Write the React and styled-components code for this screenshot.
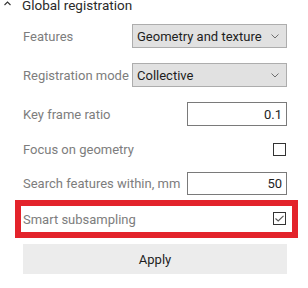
import React from "react";
import styled, { createGlobalStyle } from "styled-components";

const Global = createGlobalStyle`
  html, body { margin: 0; padding: 0; background: #ffffff; }
  body { font-family: Roboto, "Noto Sans", Arial, sans-serif; font-size: 13px; }
`;

const Panel = styled.div`
  width: 308px;
  height: 288px;
  overflow: hidden;
  box-sizing: border-box;
  padding: 0 21px 0 23px;
  display: flex;
  flex-direction: column;
`;

const Header = styled.div`
  display: flex;
  align-items: center;
  height: 12px;
  margin-top: -1px;
  margin-left: -19px;
  gap: 11px;
  color: #2a2a2a;
  font-size: 13.5px;
  line-height: 12px;
  white-space: nowrap;
`;

const Caret = styled.svg`
  width: 7px;
  height: 5px;
  margin-top: -3px;
  flex: none;
`;

const Row = styled.div`
  display: flex;
  align-items: center;
  justify-content: space-between;
  height: ${(p) => p.$h || 24}px;
  margin-top: ${(p) => p.$mt || 0}px;
  flex: none;
`;

const HighlightRow = styled(Row)`
  border: 6px solid #e3232b;
  margin-left: -8px;
  margin-right: -11px;
  padding: 0 5px 0 2px;
`;

const Label = styled.span`
  color: #7d7d7d;
  font-size: 13px;
  white-space: nowrap;
`;

const Select = styled.div`
  box-sizing: border-box;
  flex: none;
  width: ${(p) => p.$w}px;
  height: 24px;
  background: #e1e1e1;
  border: 1px solid #adadad;
  display: flex;
  align-items: center;
  justify-content: space-between;
  padding: 0 7px 0 4px;
  color: #1e1e1e;
  font-size: 13px;
  white-space: nowrap;
`;

const Chevron = styled.svg`
  width: 8px;
  height: 5px;
  flex: none;
`;

const Input = styled.div`
  box-sizing: border-box;
  flex: none;
  width: 100px;
  height: ${(p) => p.$h || 24}px;
  border: 1px solid #7a7a7a;
  background: #fff;
  display: flex;
  align-items: center;
  justify-content: flex-end;
  padding-right: 4px;
  color: #1e1e1e;
  font-size: 13px;
`;

const Box = styled.div`
  box-sizing: border-box;
  flex: none;
  width: 13px;
  height: 13px;
  border: 1px solid #333;
  margin-right: 1px;
  display: flex;
  align-items: center;
  justify-content: center;
  margin-top: ${(p) => p.$mt || 0}px;
`;

const Button = styled.div`
  margin-top: 6px;
  height: 30px;
  flex: none;
  background: #ececec;
  display: flex;
  align-items: center;
  justify-content: center;
  color: #1e1e1e;
  font-size: 13px;
`;

const ChevronDown = () => (
  <Chevron viewBox="0 0 8 5">
    <path d="M0.5 0.5 L4 4 L7.5 0.5" fill="none" stroke="#6e6e6e" strokeWidth="1" />
  </Chevron>
);

export default function App() {
  return (
    <>
      <Global />
      <Panel>
        <Header>
          <Caret viewBox="0 0 7 5">
            <path d="M0.5 4 L3.5 1 L6.5 4" fill="none" stroke="#333" strokeWidth="1.1" />
          </Caret>
          <span>Global registration</span>
        </Header>
        <Row $mt={13}>
          <Label>Features</Label>
          <Select $w={155}>
            <span>Geometry and texture</span>
            <ChevronDown />
          </Select>
        </Row>
        <Row $mt={15}>
          <Label>Registration mode</Label>
          <Select $w={155}>
            <span>Collective</span>
            <ChevronDown />
          </Select>
        </Row>
        <Row $mt={15}>
          <Label>Key frame ratio</Label>
          <Input>0.1</Input>
        </Row>
        <Row $mt={11}>
          <Label>Focus on geometry</Label>
          <Box />
        </Row>
        <Row $mt={10}>
          <Label>Search features within, mm</Label>
          <Input $h={23}>50</Input>
        </Row>
        <HighlightRow $mt={5} $h={26}>
          <Label>Smart subsampling</Label>
          <Box $mt={-2}>
            <svg width="9" height="7" viewBox="0 0 9 7">
              <path d="M0.5 3.5 L3.2 6 L8.5 0.8" fill="none" stroke="#555" strokeWidth="1.1" />
            </svg>
          </Box>
        </HighlightRow>
        <Button>Apply</Button>
      </Panel>
    </>
  );
}
